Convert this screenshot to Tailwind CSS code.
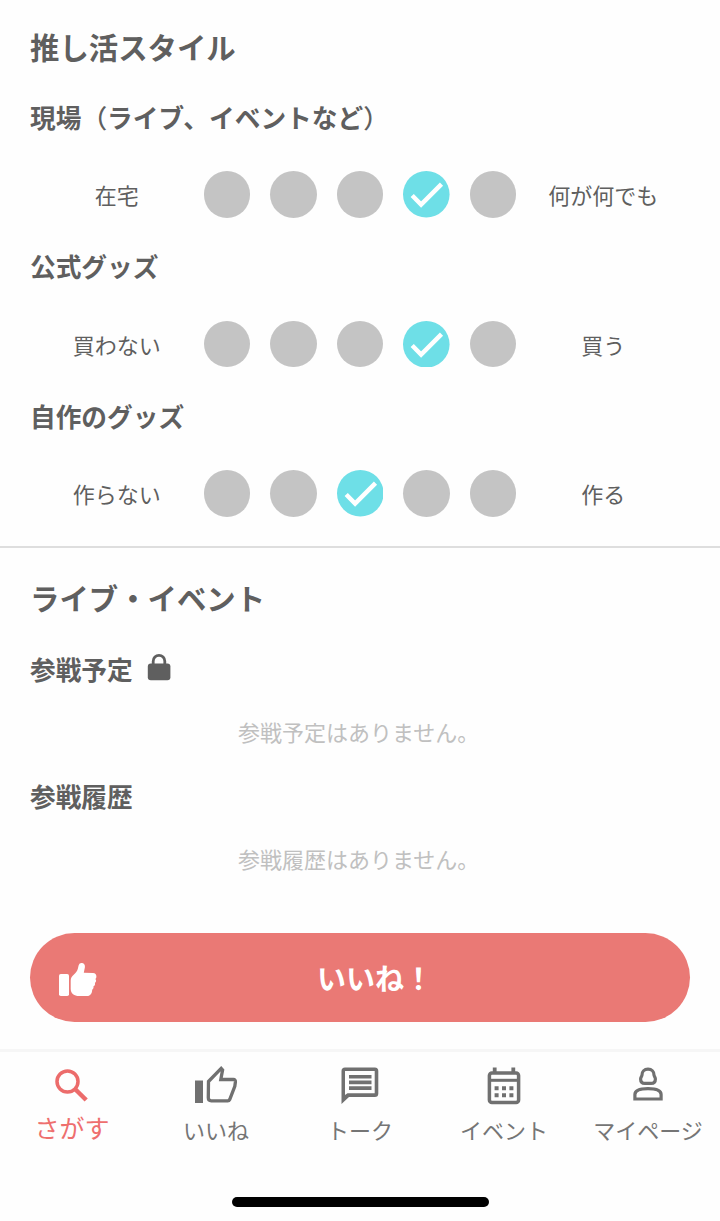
<!DOCTYPE html>
<html lang="ja">
<head>
<meta charset="utf-8">
<title>推し活スタイル</title>
<script src="https://cdn.jsdelivr.net/npm/@tailwindcss/browser@4"></script>
</head>
<body class="bg-white">
<div class="flex h-[1221px] w-[720px] flex-col overflow-hidden bg-[#fefefe] font-['Noto_Sans_CJK_JP',sans-serif] text-[22px] text-[#5f5f5f]">
  <section class="h-[546px] shrink-0 px-[30px] pt-[26px]">
    <h1 class="h-[70px] text-[29.4px] leading-[41px] font-bold">推し活スタイル</h1>
    <div class="h-[149.5px]">
      <h2 class="h-[75px] text-[25.7px] leading-[41px] font-bold">現場<span class="font-medium">（</span>ライブ、イベントなど<span class="font-medium">）</span></h2>
      <div class="flex h-[46.6px] items-center">
        <span class="flex-1 text-center leading-8">在宅</span>
        <div class="flex gap-5">
          <i class="size-[46.6px] rounded-full bg-[#c4c4c4]"></i><i class="size-[46.6px] rounded-full bg-[#c4c4c4]"></i><i class="size-[46.6px] rounded-full bg-[#c4c4c4]"></i>
          <svg class="size-[46.6px]" viewBox="0 0 46.6 46.6"><circle cx="23.3" cy="23.3" r="23.3" fill="#6edfe7"/><path d="M9.2 24.5l8.9 9L38.5 13.2" fill="none" stroke="#fff" stroke-width="4.5"/></svg>
          <i class="size-[46.6px] rounded-full bg-[#c4c4c4]"></i>
        </div>
        <span class="flex-1 text-center leading-8">何が何でも</span>
      </div>
    </div>
    <div class="h-[149.5px]">
      <h2 class="h-[75px] text-[25.7px] leading-[40px] font-bold">公式グッズ</h2>
      <div class="flex h-[46.6px] items-center">
        <span class="flex-1 text-center leading-8">買わない</span>
        <div class="flex gap-5">
          <i class="size-[46.6px] rounded-full bg-[#c4c4c4]"></i><i class="size-[46.6px] rounded-full bg-[#c4c4c4]"></i><i class="size-[46.6px] rounded-full bg-[#c4c4c4]"></i>
          <svg class="size-[46.6px]" viewBox="0 0 46.6 46.6"><circle cx="23.3" cy="23.3" r="23.3" fill="#6edfe7"/><path d="M9.2 24.5l8.9 9L38.5 13.2" fill="none" stroke="#fff" stroke-width="4.5"/></svg>
          <i class="size-[46.6px] rounded-full bg-[#c4c4c4]"></i>
        </div>
        <span class="flex-1 text-center leading-8">買う</span>
      </div>
    </div>
    <div>
      <h2 class="h-[75px] text-[25.7px] leading-[41px] font-bold">自作のグッズ</h2>
      <div class="flex h-[46.6px] items-center">
        <span class="flex-1 text-center leading-8">作らない</span>
        <div class="flex gap-5">
          <i class="size-[46.6px] rounded-full bg-[#c4c4c4]"></i><i class="size-[46.6px] rounded-full bg-[#c4c4c4]"></i>
          <svg class="size-[46.6px]" viewBox="0 0 46.6 46.6"><circle cx="23.3" cy="23.3" r="23.3" fill="#6edfe7"/><path d="M9.2 24.5l8.9 9L38.5 13.2" fill="none" stroke="#fff" stroke-width="4.5"/></svg>
          <i class="size-[46.6px] rounded-full bg-[#c4c4c4]"></i><i class="size-[46.6px] rounded-full bg-[#c4c4c4]"></i>
        </div>
        <span class="flex-1 text-center leading-8">作る</span>
      </div>
    </div>
  </section>

  <section class="h-[387px] shrink-0 border-t-2 border-[#dedede] px-[30px] pt-[29px]">
    <h1 class="h-[71px] text-[29.4px] leading-[41px] font-bold">ライブ・イベント</h1>
    <div class="flex h-[41px] gap-[14px]">
      <h2 class="text-[25.7px] leading-[41px] font-bold">参戦予定</h2>
      <svg class="mt-[6px] h-[28px] w-[24px]" viewBox="0 0 24 28"><rect x=".8" y="9.5" width="22.6" height="16.7" rx="3" fill="#5f5f5f"/><path d="M6.2 11V7.2a5.8 5.8 0 0 1 11.6 0V11" fill="none" stroke="#5f5f5f" stroke-width="2.8"/></svg>
    </div>
    <p class="mt-[26px] h-8 pl-[208px] leading-8 text-[#c0c0c0]">参戦予定はありません。</p>
    <h2 class="mt-[28px] h-[41px] text-[25.7px] leading-[41px] font-bold">参戦履歴</h2>
    <p class="mt-[26px] h-8 pl-[208px] leading-8 text-[#c0c0c0]">参戦履歴はありません。</p>
  </section>

  <div class="h-[116px] shrink-0 px-[30px]">
    <button class="flex h-[88.5px] w-full items-center rounded-full bg-[#ea7975] pl-[29px] text-white">
      <svg class="mt-1 h-[35px] w-[38px]" viewBox="0 0 38 35" fill="#fff"><rect x="0" y="12" width="10" height="22" rx="1.8"/><path d="M11.7 18.5c0-2.6 1.2-4.2 3-5.7 2.3-2 3.6-3.7 4.2-6.2l.7-3.2C20.200 1.400 21.600.6 23.200 1c2.100.5 3 2.200 2.700 4.200l-1.100 5.600 9.200.3c2.200.1 3.500 1.600 3.400 3.400 0 1.300-.4 1.900-1 2.500 1.100 1.200.9 2.800-.5 3.900.4 1.500 0 2.600-1.400 3.400.3 1.500-.2 2.600-1.300 3.400-.2 3.900-1.900 6.300-5 6.300H20c-4.600 0-8.300-2.600-8.300-7z"/></svg>
      <span class="pl-[220px] text-[29px] leading-[41px] font-bold">いいね！</span>
    </button>
  </div>

  <nav class="flex h-[141px] shrink-0 border-t-[3px] border-[#f6f6f6] text-[#757575]">
    <a class="flex w-1/5 flex-col items-center text-[25px] text-[#ee6f6e]">
      <svg class="mt-[16px] h-[36px] w-[34px]" viewBox="0 0 34 36"><g fill="none" stroke="#ec6c6b"><circle cx="12.5" cy="13.500" r="10.500" stroke-width="3.500"/><path d="M20 21l11.200 11" stroke-width="4.500"/></g></svg>
      <span class="mt-[5px] leading-9">さがす</span>
    </a>
    <a class="flex w-1/5 flex-col items-center">
      <svg class="mt-[13px] h-[38px] w-[42px]" viewBox="0 0 42 38"><path fill="#707070" d="M0 15.500h8V38H0z"/><path d="M13.500 16.500L26.200 3.400l1.400 1.500-1.800 9.600h12.600c1.500 0 2.100 1.100 2 2.400l-.6 4.500-5.100 13.100c-.4.9-1 1.300-2 1.300H16.300c-1.900 0-3-1.200-3-3z" fill="none" stroke="#707070" stroke-width="3.300"/></svg>
      <span class="mt-[10px] leading-8">いいね</span>
    </a>
    <a class="flex w-1/5 flex-col items-center">
      <svg class="mt-[15px] h-[38px] w-[38px]" viewBox="0 0 38 38"><path fill="#707070" fill-rule="evenodd" d="M4 .5h29.800a3.500 3.500 0 0 1 3.500 3.500v22.500a3.500 3.500 0 0 1-3.500 3.500H8L.5 37V4A3.500 3.500 0 0 1 4 .5zM4 4v24l2.500-1.700h27.200V4z"/><path d="M8 9.700h22.500M8 15.400h22.500M8 21.100h22.500" stroke="#707070" stroke-width="3.600"/></svg>
      <span class="mt-[8px] leading-8">トーク</span>
    </a>
    <a class="flex w-1/5 flex-col items-center">
      <svg class="mt-[15px] h-[38px] w-[34px]" viewBox="0 0 34 38"><g fill="none" stroke="#707070"><rect x="2.400" y="6" width="29.200" height="29.500" rx="2.500" stroke-width="3.500"/><path d="M2 13.300h30" stroke-width="3"/><path d="M7.700.5v5M26.300.5v5" stroke-width="3.800"/><path d="M7.600 21.200h4m3.400 0h4m3.400 0h4M7.600 28.200h4m3.400 0h4m3.400 0h4" stroke-width="4"/></g></svg>
      <span class="mt-[8px] leading-8">イベント</span>
    </a>
    <a class="flex w-1/5 flex-col items-center">
      <svg class="mt-[14px] h-[38px] w-[30px]" viewBox="0 0 30 38"><g fill="none" stroke="#707070" stroke-width="3.200"><path d="M15 3.200c-3.800 0-6 2.600-6 5.800 0 1.300-1.400 2-1.400 3.900 0 3 1.500 4.400 4.300 4.400h6.200c2.800 0 4.300-1.400 4.300-4.400 0-1.900-1.400-2.600-1.400-3.900 0-3.200-2.200-5.800-6-5.800z"/><path d="M1.900 33v-4.500c0-4.300 5.600-5.900 13.100-5.900s13.100 1.600 13.100 5.900V33z"/></g></svg>
      <span class="mt-[9px] leading-8">マイページ</span>
    </a>
  </nav>
  <div class="mx-auto mt-[6.500px] h-[10px] w-[257px] shrink-0 rounded-full bg-black"></div>
</div>
</body>
</html>
